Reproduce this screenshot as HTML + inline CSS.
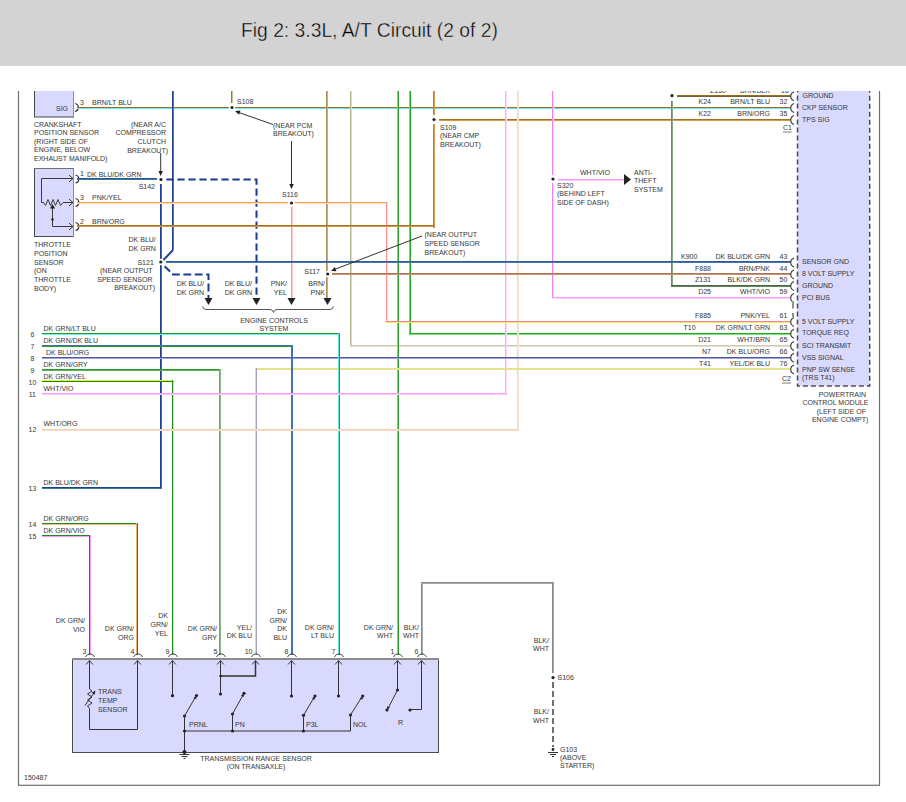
<!DOCTYPE html>
<html><head><meta charset="utf-8"><style>
html,body{margin:0;padding:0;background:#fff;}
body{width:906px;height:802px;position:relative;overflow:hidden;font-family:"Liberation Sans",sans-serif;}
#hdr{position:absolute;left:0;top:0;width:906px;height:66px;background:#d3d3d3;}
#ttl{position:absolute;left:241px;top:19px;font-size:19.3px;color:#000;white-space:nowrap;line-height:24px;-webkit-text-stroke:0.4px #d3d3d3;}
svg{position:absolute;left:0;top:0;}
svg text{font-family:"Liberation Sans",sans-serif;stroke:#3c3c3c;stroke-width:0.04px;}
</style></head><body>
<svg width="906" height="802" viewBox="0 0 906 802">
<defs><clipPath id="cp"><rect x="0" y="91" width="906" height="711"/></clipPath></defs>
<g clip-path="url(#cp)">
<rect x="18.5" y="60" width="861" height="725.3" fill="none" stroke="#707070" stroke-width="1.2"/>
<rect x="34.5" y="80" width="39" height="37" fill="#d9d9fe" stroke="#4a4a4a" stroke-width="1"/>
<rect x="73" y="80" width="1" height="37.5" fill="#8a8aa0"/>
<text x="56" y="110.6" font-size="7" fill="#3c3c3c">SIG</text>
<path d="M75.0,103.5 Q78.5,104.5 78.3,107.5 Q78.5,110.5 75.0,111.5" stroke="#333" stroke-width="1.2" fill="none" />
<text x="80" y="104.6" font-size="7" fill="#3c3c3c">3</text>
<text x="92" y="104.6" font-size="7" fill="#3c3c3c">BRN/LT BLU</text>
<text x="34" y="126.6" font-size="7" fill="#3c3c3c">CRANKSHAFT</text>
<text x="34" y="135.1" font-size="7" fill="#3c3c3c">POSITION SENSOR</text>
<text x="34" y="143.6" font-size="7" fill="#3c3c3c">(RIGHT SIDE OF</text>
<text x="34" y="152.1" font-size="7" fill="#3c3c3c">ENGINE, BELOW</text>
<text x="34" y="160.6" font-size="7" fill="#3c3c3c">EXHAUST MANIFOLD)</text>
<text x="166" y="126.6" text-anchor="end" font-size="7" fill="#3c3c3c">(NEAR A/C</text>
<text x="166" y="135.1" text-anchor="end" font-size="7" fill="#3c3c3c">COMPRESSOR</text>
<text x="166" y="143.6" text-anchor="end" font-size="7" fill="#3c3c3c">CLUTCH</text>
<text x="168" y="152.8" text-anchor="end" font-size="7" fill="#3c3c3c">BREAKOUT)</text>
<rect x="34.5" y="168.5" width="39" height="68" fill="#d9d9fe" stroke="#4a4a4a" stroke-width="1"/>
<rect x="73" y="168" width="1" height="69" fill="#8a8aa0"/>
<rect x="34" y="168" width="40" height="1" fill="#707080"/>
<path d="M73,178.5 L41.5,178.5 L41.5,202.5 L43.5,202.5 L45.5,205.5 L48,199.5 L50.5,205.5 L53,199.5 L55.5,205.5 L58,199.5 L60.5,205.5 L63,202.5 L73,202.5" stroke="#3a3a3a" stroke-width="1" fill="none" />
<path d="M69.0,181.9 L73,178.5 L69.0,175.1" stroke="#3a3a3a" stroke-width="1" fill="none" />
<path d="M69.0,205.9 L73,202.5 L69.0,199.1" stroke="#3a3a3a" stroke-width="1" fill="none" />
<path d="M69.0,229.9 L73,226.5 L69.0,223.1" stroke="#3a3a3a" stroke-width="1" fill="none" />
<path d="M52.5,208 L52.5,226.5 L73,226.5" stroke="#3a3a3a" stroke-width="1" fill="none" />
<path d="M50,208.5 L55,208.5 L52.5,204 Z" fill="#222222"/>
<circle cx="52.5" cy="219.5" r="1.2" fill="#222222"/>
<path d="M75.5,175 Q79,176 78.8,179 Q79,182 75.5,183" stroke="#333" stroke-width="1.2" fill="none" />
<path d="M75.5,198.5 Q79,199.5 78.8,202.5 Q79,205.5 75.5,206.5" stroke="#333" stroke-width="1.2" fill="none" />
<path d="M75.5,222.5 Q79,223.5 78.8,226.5 Q79,229.5 75.5,230.5" stroke="#333" stroke-width="1.2" fill="none" />
<text x="80" y="175.5" font-size="7" fill="#3c3c3c">1</text>
<text x="87" y="176.6" font-size="7" fill="#3c3c3c">DK BLU/DK GRN</text>
<text x="80" y="199.5" font-size="7" fill="#3c3c3c">3</text>
<text x="92" y="199.7" font-size="7" fill="#3c3c3c">PNK/YEL</text>
<text x="80" y="223.8" font-size="7" fill="#3c3c3c">2</text>
<text x="92" y="223.8" font-size="7" fill="#3c3c3c">BRN/ORG</text>
<text x="34" y="247.0" font-size="7" fill="#3c3c3c">THROTTLE</text>
<text x="34" y="255.75" font-size="7" fill="#3c3c3c">POSITION</text>
<text x="34" y="264.5" font-size="7" fill="#3c3c3c">SENSOR</text>
<text x="34" y="273.25" font-size="7" fill="#3c3c3c">(ON</text>
<text x="34" y="282.0" font-size="7" fill="#3c3c3c">THROTTLE</text>
<text x="34" y="290.75" font-size="7" fill="#3c3c3c">BODY)</text>
<rect x="797.5" y="80" width="72.2" height="306" fill="#d9d9fe" stroke="#4a4a4a" stroke-width="1.5" stroke-dasharray="5,3"/>
<rect x="77" y="107" width="714" height="1" fill="#9a6e1e"/>
<rect x="77" y="108" width="714" height="1" fill="#66f0f0"/>
<rect x="677" y="95" width="114" height="1" fill="#94701e"/>
<rect x="677" y="96" width="114" height="1" fill="#7a6030"/>
<rect x="439" y="119" width="352" height="1" fill="#a07228"/>
<rect x="439" y="120" width="352" height="1" fill="#d89a40"/>
<rect x="231" y="80" width="1" height="23" fill="#7a8a30"/>
<rect x="232" y="80" width="1" height="23" fill="#c0c890"/>
<rect x="172" y="80" width="1" height="170" fill="#1f3f94"/>
<rect x="173" y="80" width="1" height="170" fill="#3c9060"/>
<path d="M173,250 L163,260.5" stroke="#1f3f94" stroke-width="2" fill="none" />
<rect x="326" y="80" width="1" height="218" fill="#b08a58"/>
<rect x="327" y="80" width="1" height="218" fill="#c8a888"/>
<rect x="350" y="80" width="1" height="267" fill="#b8b690"/>
<rect x="351" y="80" width="1" height="267" fill="#dcdac8"/>
<rect x="350" y="345" width="441" height="1" fill="#cfc7ae"/>
<rect x="350" y="346" width="441" height="1" fill="#e4e0d2"/>
<rect x="397" y="80" width="1" height="575" fill="#8fcc8f"/>
<rect x="398" y="80" width="1" height="575" fill="#2a9a2a"/>
<rect x="409" y="80" width="1" height="255" fill="#66dd66"/>
<rect x="410" y="80" width="1" height="255" fill="#22aa22"/>
<rect x="409" y="333" width="382" height="1" fill="#22aa22"/>
<rect x="409" y="334" width="382" height="1" fill="#7de07d"/>
<rect x="433" y="80" width="1" height="35" fill="#b08848"/>
<rect x="434" y="80" width="1" height="35" fill="#d09848"/>
<rect x="433" y="124" width="1" height="104" fill="#b08848"/>
<rect x="434" y="124" width="1" height="104" fill="#d09848"/>
<rect x="505" y="80" width="1" height="315" fill="#f4b0f4"/>
<rect x="506" y="80" width="1" height="315" fill="#ffd8ff"/>
<rect x="517" y="80" width="1" height="351" fill="#f5d8c0"/>
<rect x="518" y="80" width="1" height="351" fill="#f8e6d8"/>
<rect x="552" y="80" width="1" height="95" fill="#f080f0"/>
<rect x="553" y="80" width="1" height="95" fill="#ffe0ff"/>
<rect x="552" y="183" width="1" height="115" fill="#f080f0"/>
<rect x="553" y="183" width="1" height="115" fill="#ffe0ff"/>
<rect x="552" y="297" width="239" height="1" fill="#ff99ff"/>
<rect x="552" y="298" width="239" height="1" fill="#ffd0ff"/>
<rect x="671" y="101" width="1" height="186" fill="#6a8a6a"/>
<rect x="672" y="101" width="1" height="186" fill="#88a888"/>
<rect x="671" y="285" width="120" height="1" fill="#4c644c"/>
<rect x="671" y="286" width="120" height="1" fill="#5a8c5a"/>
<rect x="77" y="178" width="80" height="1" fill="#2850a0"/>
<rect x="77" y="179" width="80" height="1" fill="#3c8080"/>
<rect x="160" y="184" width="1" height="305" fill="#1f3f94"/>
<rect x="161" y="184" width="1" height="305" fill="#2a8a50"/>
<rect x="42" y="487" width="119" height="1" fill="#1f3f94"/>
<rect x="42" y="488" width="119" height="1" fill="#3c8080"/>
<path d="M166.4,179.5 L256.5,179.5 L256.5,298" stroke="#1a3a94" stroke-width="2" fill="none" stroke-dasharray="7.3,3.7"/>
<rect x="77" y="202" width="310" height="1" fill="#ff9098"/>
<rect x="77" y="203" width="310" height="1" fill="#f4f080"/>
<rect x="386" y="202" width="1" height="121" fill="#ff9098"/>
<rect x="387" y="202" width="1" height="121" fill="#f4f080"/>
<rect x="386" y="321" width="405" height="1" fill="#ff8090"/>
<rect x="386" y="322" width="405" height="1" fill="#f0ee50"/>
<rect x="291" y="207" width="1" height="91" fill="#ff9aa0"/>
<rect x="292" y="207" width="1" height="91" fill="#ffc8c8"/>
<rect x="77" y="225" width="358" height="1" fill="#a07228"/>
<rect x="77" y="226" width="358" height="1" fill="#d89a40"/>
<rect x="166" y="261" width="625" height="1" fill="#3058a0"/>
<rect x="166" y="262" width="625" height="1" fill="#4a78a0"/>
<path d="M164.6,266.3 L170,271.5" stroke="#1a3a94" stroke-width="2" fill="none" />
<path d="M172,274.5 L208.5,274.5 L208.5,298" stroke="#1a3a94" stroke-width="2" fill="none" stroke-dasharray="7.8,3.6"/>
<rect x="332" y="273" width="459" height="1" fill="#a87850"/>
<rect x="332" y="274" width="459" height="1" fill="#c89078"/>
<rect x="42" y="357" width="749" height="1" fill="#5058a0"/>
<rect x="42" y="358" width="749" height="1" fill="#a0a4d0"/>
<rect x="255" y="368" width="536" height="1" fill="#eeee30"/>
<rect x="255" y="369" width="536" height="1" fill="#d8d8f0"/>
<rect x="255" y="368" width="1" height="287" fill="#eeee30"/>
<rect x="256" y="368" width="1" height="287" fill="#a0a0c0"/>
<rect x="42" y="333" width="298" height="1" fill="#22a022"/>
<rect x="42" y="334" width="298" height="1" fill="#66f0f0"/>
<rect x="338" y="333" width="1" height="322" fill="#66e0e0"/>
<rect x="339" y="333" width="1" height="322" fill="#22a022"/>
<rect x="42" y="345" width="251" height="1" fill="#4a6ab0"/>
<rect x="42" y="346" width="251" height="1" fill="#22a022"/>
<rect x="291" y="345" width="1" height="310" fill="#22a022"/>
<rect x="292" y="345" width="1" height="310" fill="#4070b0"/>
<rect x="42" y="369" width="179" height="1" fill="#2a9a2a"/>
<rect x="42" y="370" width="179" height="1" fill="#60b060"/>
<rect x="219" y="369" width="1" height="286" fill="#6aaa6a"/>
<rect x="220" y="369" width="1" height="286" fill="#88bb88"/>
<rect x="42" y="380" width="132" height="1" fill="#eeee30"/>
<rect x="42" y="381" width="132" height="1" fill="#1a8a1a"/>
<rect x="172" y="380" width="1" height="275" fill="#1a8a1a"/>
<rect x="173" y="380" width="1" height="275" fill="#eeee30"/>
<rect x="42" y="393" width="465" height="1" fill="#ff99ff"/>
<rect x="42" y="394" width="465" height="1" fill="#ffd0ff"/>
<rect x="42" y="429" width="477" height="1" fill="#f5d0b0"/>
<rect x="42" y="430" width="477" height="1" fill="#f8e0cc"/>
<rect x="42" y="523" width="96" height="1" fill="#1a8a1a"/>
<rect x="42" y="524" width="96" height="1" fill="#f0c080"/>
<rect x="136" y="523" width="1" height="132" fill="#f0b070"/>
<rect x="137" y="523" width="1" height="132" fill="#1a8a1a"/>
<rect x="42" y="535" width="49" height="1" fill="#1a8a1a"/>
<rect x="42" y="536" width="49" height="1" fill="#ff99ff"/>
<rect x="89" y="535" width="1" height="120" fill="#1a8a1a"/>
<rect x="90" y="535" width="1" height="120" fill="#ff99ff"/>
<rect x="421" y="582" width="1" height="73" fill="#888"/>
<rect x="422" y="582" width="1" height="73" fill="#aaa"/>
<rect x="421" y="582" width="133" height="1" fill="#888"/>
<rect x="421" y="583" width="133" height="1" fill="#aaa"/>
<rect x="552" y="582" width="1" height="91" fill="#888"/>
<rect x="553" y="582" width="1" height="91" fill="#aaa"/>
<path d="M553,682 L553,747" stroke="#707070" stroke-width="2" fill="none" stroke-dasharray="6,3"/>
<circle cx="232" cy="107.5" r="3.2" fill="#fff"/>
<circle cx="232" cy="107.5" r="1.6" fill="#222222"/>
<text x="237" y="104" font-size="7" fill="#3c3c3c">S108</text>
<line x1="273" y1="124.5" x2="236" y2="111.5" stroke="#333" stroke-width="1" />
<path d="M240.5,110.5 L235,111 L239.0,114.8 Z" fill="#222222"/>
<text x="273" y="127.5" font-size="7" fill="#3c3c3c">(NEAR PCM</text>
<text x="273" y="135.7" font-size="7" fill="#3c3c3c">BREAKOUT)</text>
<line x1="291.5" y1="141" x2="291.5" y2="186" stroke="#333" stroke-width="1" />
<path d="M289.2,184.0 L291.5,189 L293.8,184.0 Z" fill="#222222"/>
<text x="282" y="197" font-size="7" fill="#3c3c3c">S116</text>
<circle cx="291.5" cy="203" r="3.2" fill="#fff"/>
<circle cx="291.5" cy="203" r="1.6" fill="#222222"/>
<circle cx="161" cy="179.5" r="3.2" fill="#fff"/>
<circle cx="161" cy="179.5" r="1.6" fill="#222222"/>
<line x1="160.7" y1="153" x2="160.7" y2="172" stroke="#333" stroke-width="1" />
<path d="M158.4,171.0 L160.7,176 L162.9,171.0 Z" fill="#222222"/>
<text x="155" y="188.7" text-anchor="end" font-size="7" fill="#3c3c3c">S142</text>
<circle cx="434" cy="119.5" r="3.2" fill="#fff"/>
<circle cx="434" cy="119.5" r="1.6" fill="#222222"/>
<text x="440" y="129.7" font-size="7" fill="#3c3c3c">S109</text>
<text x="440" y="138.2" font-size="7" fill="#3c3c3c">(NEAR CMP</text>
<text x="440" y="146.7" font-size="7" fill="#3c3c3c">BREAKOUT)</text>
<circle cx="553" cy="179" r="3.2" fill="#fff"/>
<circle cx="553" cy="179" r="1.6" fill="#222222"/>
<rect x="558" y="179" width="67" height="1" fill="#ff90ff"/>
<rect x="558" y="180" width="67" height="1" fill="#ffd0ff"/>
<path d="M624,174 L631,179.5 L624,185 Z" fill="#222222"/>
<text x="580" y="175" font-size="7" fill="#3c3c3c">WHT/VIO</text>
<text x="557" y="187.8" font-size="7" fill="#3c3c3c">S320</text>
<text x="557" y="196.3" font-size="7" fill="#3c3c3c">(BEHIND LEFT</text>
<text x="557" y="204.8" font-size="7" fill="#3c3c3c">SIDE OF DASH)</text>
<text x="634" y="174.7" font-size="7" fill="#3c3c3c">ANTI-</text>
<text x="634" y="183.2" font-size="7" fill="#3c3c3c">THEFT</text>
<text x="634" y="191.7" font-size="7" fill="#3c3c3c">SYSTEM</text>
<circle cx="672" cy="95.7" r="3.2" fill="#fff"/>
<circle cx="672" cy="95.7" r="1.6" fill="#222222"/>
<circle cx="160.8" cy="262" r="3.2" fill="#fff"/>
<circle cx="160.8" cy="262" r="1.6" fill="#222222"/>
<text x="155.8" y="242.0" text-anchor="end" font-size="7" fill="#3c3c3c">DK BLU/</text>
<text x="155.8" y="250.8" text-anchor="end" font-size="7" fill="#3c3c3c">DK GRN</text>
<text x="153.8" y="264.5" text-anchor="end" font-size="7" fill="#3c3c3c">S121</text>
<text x="152.5" y="273.0" text-anchor="end" font-size="7" fill="#3c3c3c">(NEAR OUTPUT</text>
<text x="152.5" y="281.8" text-anchor="end" font-size="7" fill="#3c3c3c">SPEED SENSOR</text>
<text x="155" y="290" text-anchor="end" font-size="7" fill="#3c3c3c">BREAKOUT)</text>
<circle cx="327.7" cy="274" r="3.2" fill="#fff"/>
<circle cx="327.7" cy="274" r="1.6" fill="#222222"/>
<text x="320" y="274.3" text-anchor="end" font-size="7" fill="#3c3c3c">S117</text>
<line x1="422" y1="236" x2="333" y2="270" stroke="#333" stroke-width="1" />
<path d="M334.9,267.1 L331,271 L336.5,271.3 Z" fill="#222222"/>
<text x="424.5" y="236.5" font-size="7" fill="#3c3c3c">(NEAR OUTPUT</text>
<text x="424.5" y="245.5" font-size="7" fill="#3c3c3c">SPEED SENSOR</text>
<text x="424.5" y="254.5" font-size="7" fill="#3c3c3c">BREAKOUT)</text>
<path d="M204.5,298 L212.5,298 L208.5,305 Z" fill="#222222"/>
<path d="M252.5,298 L260.5,298 L256.5,305 Z" fill="#222222"/>
<path d="M287.5,298 L295.5,298 L291.5,305 Z" fill="#222222"/>
<path d="M323.5,298 L331.5,298 L327.5,305 Z" fill="#222222"/>
<text x="204" y="286.0" text-anchor="end" font-size="7" fill="#3c3c3c">DK BLU/</text>
<text x="204" y="294.8" text-anchor="end" font-size="7" fill="#3c3c3c">DK GRN</text>
<text x="252" y="286.0" text-anchor="end" font-size="7" fill="#3c3c3c">DK BLU/</text>
<text x="252" y="294.8" text-anchor="end" font-size="7" fill="#3c3c3c">DK GRN</text>
<text x="287" y="286.0" text-anchor="end" font-size="7" fill="#3c3c3c">PNK/</text>
<text x="287" y="294.8" text-anchor="end" font-size="7" fill="#3c3c3c">YEL</text>
<text x="325" y="286.0" text-anchor="end" font-size="7" fill="#3c3c3c">BRN/</text>
<text x="325" y="294.8" text-anchor="end" font-size="7" fill="#3c3c3c">PNK</text>
<path d="M202.5,306.5 Q203,309.5 206,309.5 L270,309.5 Q273,309.5 273.5,312.5 Q274,309.5 277,309.5 L330,309.5 Q333,309.5 333.5,306.5" stroke="#555" stroke-width="1" fill="none" />
<text x="274" y="323.0" text-anchor="middle" font-size="7" fill="#3c3c3c">ENGINE CONTROLS</text>
<text x="274" y="331.2" text-anchor="middle" font-size="7" fill="#3c3c3c">SYSTEM</text>
<text x="32.4" y="336.5" text-anchor="middle" font-size="7" fill="#3c3c3c">6</text>
<text x="43.5" y="330.7" font-size="7" fill="#3c3c3c">DK GRN/LT BLU</text>
<text x="32.4" y="348.5" text-anchor="middle" font-size="7" fill="#3c3c3c">7</text>
<text x="43.5" y="342.7" font-size="7" fill="#3c3c3c">DK GRN/DK BLU</text>
<text x="32.4" y="360.5" text-anchor="middle" font-size="7" fill="#3c3c3c">8</text>
<text x="46" y="354.7" font-size="7" fill="#3c3c3c">DK BLU/ORG</text>
<text x="32.4" y="372.5" text-anchor="middle" font-size="7" fill="#3c3c3c">9</text>
<text x="43.5" y="366.7" font-size="7" fill="#3c3c3c">DK GRN/GRY</text>
<text x="32.4" y="384.5" text-anchor="middle" font-size="7" fill="#3c3c3c">10</text>
<text x="43.5" y="378.7" font-size="7" fill="#3c3c3c">DK GRN/YEL</text>
<text x="32.4" y="396.5" text-anchor="middle" font-size="7" fill="#3c3c3c">11</text>
<text x="43.5" y="390.7" font-size="7" fill="#3c3c3c">WHT/VIO</text>
<text x="32.4" y="432" text-anchor="middle" font-size="7" fill="#3c3c3c">12</text>
<text x="43.5" y="426.2" font-size="7" fill="#3c3c3c">WHT/ORG</text>
<text x="32.4" y="490.5" text-anchor="middle" font-size="7" fill="#3c3c3c">13</text>
<text x="43.5" y="484.7" font-size="7" fill="#3c3c3c">DK BLU/DK GRN</text>
<text x="32.4" y="526.5" text-anchor="middle" font-size="7" fill="#3c3c3c">14</text>
<text x="43.5" y="520.7" font-size="7" fill="#3c3c3c">DK GRN/ORG</text>
<text x="32.4" y="538.5" text-anchor="middle" font-size="7" fill="#3c3c3c">15</text>
<text x="43.5" y="532.7" font-size="7" fill="#3c3c3c">DK GRN/VIO</text>
<text x="726" y="92.8" text-anchor="end" font-size="7" fill="#3c3c3c">Z150</text>
<text x="770" y="92.8" text-anchor="end" font-size="7" fill="#3c3c3c">BRN/BLK</text>
<text x="781" y="92.8" font-size="7" fill="#3c3c3c">16</text>
<path d="M794,91.7 Q790.5,93.2 790.8,96.2 Q790.5,99.2 794,100.7" stroke="#3a3a3a" stroke-width="1.1" fill="none" />
<text x="802.5" y="98.2" font-size="7" fill="#3c3c3c">GROUND</text>
<text x="698.5" y="104.2" font-size="7" fill="#3c3c3c">K24</text>
<text x="770" y="104.2" text-anchor="end" font-size="7" fill="#3c3c3c">BRN/LT BLU</text>
<text x="779.5" y="104.2" font-size="7" fill="#3c3c3c">32</text>
<path d="M794,103.5 Q790.5,105.0 790.8,108.0 Q790.5,111.0 794,112.5" stroke="#3a3a3a" stroke-width="1.1" fill="none" />
<text x="802" y="110.0" font-size="7" fill="#3c3c3c">CKP SENSOR</text>
<text x="698.5" y="116.2" font-size="7" fill="#3c3c3c">K22</text>
<text x="770" y="116.2" text-anchor="end" font-size="7" fill="#3c3c3c">BRN/ORG</text>
<text x="779.5" y="116.2" font-size="7" fill="#3c3c3c">35</text>
<path d="M794,115.5 Q790.5,117.0 790.8,120.0 Q790.5,123.0 794,124.5" stroke="#3a3a3a" stroke-width="1.1" fill="none" />
<text x="802" y="122.0" font-size="7" fill="#3c3c3c">TPS SIG</text>
<text x="681" y="258.7" font-size="7" fill="#3c3c3c">K900</text>
<text x="770" y="258.7" text-anchor="end" font-size="7" fill="#3c3c3c">DK BLU/DK GRN</text>
<text x="779.5" y="258.7" font-size="7" fill="#3c3c3c">43</text>
<path d="M794,258.0 Q790.5,259.5 790.8,262.5 Q790.5,265.5 794,267.0" stroke="#3a3a3a" stroke-width="1.1" fill="none" />
<text x="802" y="263.5" font-size="7" fill="#3c3c3c">SENSOR GND</text>
<text x="711" y="270.59999999999997" text-anchor="end" font-size="7" fill="#3c3c3c">F888</text>
<text x="770" y="270.59999999999997" text-anchor="end" font-size="7" fill="#3c3c3c">BRN/PNK</text>
<text x="779.5" y="270.59999999999997" font-size="7" fill="#3c3c3c">44</text>
<path d="M794,269.9 Q790.5,271.4 790.8,274.4 Q790.5,277.4 794,278.9" stroke="#3a3a3a" stroke-width="1.1" fill="none" />
<text x="802" y="276.4" font-size="7" fill="#3c3c3c">8 VOLT SUPPLY</text>
<text x="711" y="282.3" text-anchor="end" font-size="7" fill="#3c3c3c">Z131</text>
<text x="770" y="282.3" text-anchor="end" font-size="7" fill="#3c3c3c">BLK/DK GRN</text>
<text x="779.5" y="282.3" font-size="7" fill="#3c3c3c">50</text>
<path d="M794,281.6 Q790.5,283.1 790.8,286.1 Q790.5,289.1 794,290.6" stroke="#3a3a3a" stroke-width="1.1" fill="none" />
<text x="802" y="288.1" font-size="7" fill="#3c3c3c">GROUND</text>
<text x="711" y="294.3" text-anchor="end" font-size="7" fill="#3c3c3c">D25</text>
<text x="770" y="294.3" text-anchor="end" font-size="7" fill="#3c3c3c">WHT/VIO</text>
<text x="779.5" y="294.3" font-size="7" fill="#3c3c3c">59</text>
<path d="M794,293.6 Q790.5,295.1 790.8,298.1 Q790.5,301.1 794,302.6" stroke="#3a3a3a" stroke-width="1.1" fill="none" />
<text x="802" y="300.1" font-size="7" fill="#3c3c3c">PCI BUS</text>
<text x="711" y="318.09999999999997" text-anchor="end" font-size="7" fill="#3c3c3c">F885</text>
<text x="770" y="318.09999999999997" text-anchor="end" font-size="7" fill="#3c3c3c">PNK/YEL</text>
<text x="779.5" y="318.09999999999997" font-size="7" fill="#3c3c3c">61</text>
<path d="M794,317.4 Q790.5,318.9 790.8,321.9 Q790.5,324.9 794,326.4" stroke="#3a3a3a" stroke-width="1.1" fill="none" />
<text x="802" y="323.9" font-size="7" fill="#3c3c3c">5 VOLT SUPPLY</text>
<text x="683.5" y="330.0" font-size="7" fill="#3c3c3c">T10</text>
<text x="770" y="330.0" text-anchor="end" font-size="7" fill="#3c3c3c">DK GRN/LT GRN</text>
<text x="779.5" y="330.0" font-size="7" fill="#3c3c3c">63</text>
<path d="M794,329.3 Q790.5,330.8 790.8,333.8 Q790.5,336.8 794,338.3" stroke="#3a3a3a" stroke-width="1.1" fill="none" />
<text x="802" y="334.8" font-size="7" fill="#3c3c3c">TORQUE REQ</text>
<text x="711" y="342.2" text-anchor="end" font-size="7" fill="#3c3c3c">D21</text>
<text x="770" y="342.2" text-anchor="end" font-size="7" fill="#3c3c3c">WHT/BRN</text>
<text x="779.5" y="342.2" font-size="7" fill="#3c3c3c">65</text>
<path d="M794,341.5 Q790.5,343.0 790.8,346.0 Q790.5,349.0 794,350.5" stroke="#3a3a3a" stroke-width="1.1" fill="none" />
<text x="802" y="348.0" font-size="7" fill="#3c3c3c">SCI TRANSMIT</text>
<text x="711" y="354.0" text-anchor="end" font-size="7" fill="#3c3c3c">N7</text>
<text x="770" y="354.0" text-anchor="end" font-size="7" fill="#3c3c3c">DK BLU/ORG</text>
<text x="779.5" y="354.0" font-size="7" fill="#3c3c3c">66</text>
<path d="M794,353.3 Q790.5,354.8 790.8,357.8 Q790.5,360.8 794,362.3" stroke="#3a3a3a" stroke-width="1.1" fill="none" />
<text x="802" y="359.8" font-size="7" fill="#3c3c3c">VSS SIGNAL</text>
<text x="711" y="365.7" text-anchor="end" font-size="7" fill="#3c3c3c">T41</text>
<text x="770" y="365.7" text-anchor="end" font-size="7" fill="#3c3c3c">YEL/DK BLU</text>
<text x="779.5" y="365.7" font-size="7" fill="#3c3c3c">76</text>
<path d="M794,365.0 Q790.5,366.5 790.8,369.5 Q790.5,372.5 794,374.0" stroke="#3a3a3a" stroke-width="1.1" fill="none" />
<text x="802" y="371.5" font-size="7" fill="#3c3c3c">PNP SW SENSE</text>
<text x="802" y="380" font-size="7" fill="#3c3c3c">(TRS T41)</text>
<text x="783" y="130.3" font-size="7" fill="#3c3c3c">C1</text>
<line x1="783" y1="132" x2="791.5" y2="132" stroke="#555" stroke-width="0.8" />
<text x="782" y="381.3" font-size="7" fill="#3c3c3c">C2</text>
<line x1="782" y1="383" x2="791" y2="383" stroke="#555" stroke-width="0.8" />
<line x1="793" y1="303" x2="793" y2="308.5" stroke="#555" stroke-width="1.3" />
<line x1="793" y1="313" x2="793" y2="317" stroke="#555" stroke-width="1.3" />
<text x="866" y="396.8" text-anchor="end" font-size="7" fill="#3c3c3c">POWERTRAIN</text>
<text x="868.3" y="405" text-anchor="end" font-size="7" fill="#3c3c3c">CONTROL MODULE</text>
<text x="866" y="413.5" text-anchor="end" font-size="7" fill="#3c3c3c">(LEFT SIDE OF</text>
<text x="868.3" y="422.3" text-anchor="end" font-size="7" fill="#3c3c3c">ENGINE COMPT)</text>
<rect x="72.5" y="658.5" width="366" height="94" fill="#d9d9fe" stroke="#4a4a4a" stroke-width="1"/>
<rect x="72" y="658" width="367" height="2" fill="#8c8c8c"/>
<path d="M85.5,657 Q87.0,653.8 90.0,653.8 Q93.0,653.8 94.5,657" stroke="#444" stroke-width="1" fill="none" />
<text x="86.5" y="653.5" text-anchor="end" font-size="7" fill="#3c3c3c">3</text>
<path d="M92.9,664.5 L89.5,660.5 L86.1,664.5" stroke="#3a3a3a" stroke-width="1" fill="none" />
<path d="M133.5,657 Q135.0,653.8 138.0,653.8 Q141.0,653.8 142.5,657" stroke="#444" stroke-width="1" fill="none" />
<text x="134.5" y="653.5" text-anchor="end" font-size="7" fill="#3c3c3c">4</text>
<path d="M140.9,664.5 L137.5,660.5 L134.1,664.5" stroke="#3a3a3a" stroke-width="1" fill="none" />
<path d="M168.5,657 Q170.0,653.8 173.0,653.8 Q176.0,653.8 177.5,657" stroke="#444" stroke-width="1" fill="none" />
<text x="169.5" y="653.5" text-anchor="end" font-size="7" fill="#3c3c3c">9</text>
<path d="M175.9,664.5 L172.5,660.5 L169.1,664.5" stroke="#3a3a3a" stroke-width="1" fill="none" />
<path d="M216.5,657 Q218.0,653.8 221.0,653.8 Q224.0,653.8 225.5,657" stroke="#444" stroke-width="1" fill="none" />
<text x="217.5" y="653.5" text-anchor="end" font-size="7" fill="#3c3c3c">5</text>
<path d="M223.9,664.5 L220.5,660.5 L217.1,664.5" stroke="#3a3a3a" stroke-width="1" fill="none" />
<path d="M251.5,657 Q253.0,653.8 256.0,653.8 Q259.0,653.8 260.5,657" stroke="#444" stroke-width="1" fill="none" />
<text x="252.5" y="653.5" text-anchor="end" font-size="7" fill="#3c3c3c">10</text>
<path d="M258.9,664.5 L255.5,660.5 L252.1,664.5" stroke="#3a3a3a" stroke-width="1" fill="none" />
<path d="M287.5,657 Q289.0,653.8 292.0,653.8 Q295.0,653.8 296.5,657" stroke="#444" stroke-width="1" fill="none" />
<text x="288.5" y="653.5" text-anchor="end" font-size="7" fill="#3c3c3c">8</text>
<path d="M294.9,664.5 L291.5,660.5 L288.1,664.5" stroke="#3a3a3a" stroke-width="1" fill="none" />
<path d="M334.5,657 Q336.0,653.8 339.0,653.8 Q342.0,653.8 343.5,657" stroke="#444" stroke-width="1" fill="none" />
<text x="335.5" y="653.5" text-anchor="end" font-size="7" fill="#3c3c3c">7</text>
<path d="M341.9,664.5 L338.5,660.5 L335.1,664.5" stroke="#3a3a3a" stroke-width="1" fill="none" />
<path d="M393.5,657 Q395.0,653.8 398.0,653.8 Q401.0,653.8 402.5,657" stroke="#444" stroke-width="1" fill="none" />
<text x="394.5" y="653.5" text-anchor="end" font-size="7" fill="#3c3c3c">1</text>
<path d="M400.9,664.5 L397.5,660.5 L394.1,664.5" stroke="#3a3a3a" stroke-width="1" fill="none" />
<path d="M417.5,657 Q419.0,653.8 422.0,653.8 Q425.0,653.8 426.5,657" stroke="#444" stroke-width="1" fill="none" />
<text x="418.5" y="653.5" text-anchor="end" font-size="7" fill="#3c3c3c">6</text>
<path d="M424.9,664.5 L421.5,660.5 L418.1,664.5" stroke="#3a3a3a" stroke-width="1" fill="none" />
<path d="M89.5,661 L89.5,689 L92,691 L87.5,694 L92,697 L87.5,700 L92,703 L87.5,706 L89.5,708.5 L89.5,729.5 L137.5,729.5 L137.5,661" stroke="#333" stroke-width="1" fill="none" />
<line x1="85" y1="705.5" x2="94.5" y2="692" stroke="#333" stroke-width="1" />
<path d="M94.7,694.8 L95.5,690.5 L91.7,692.7 Z" fill="#222222"/>
<text x="98" y="694.0" font-size="7" fill="#3c3c3c">TRANS</text>
<text x="98" y="702.8" font-size="7" fill="#3c3c3c">TEMP</text>
<text x="98" y="711.6" font-size="7" fill="#3c3c3c">SENSOR</text>
<line x1="172.5" y1="661" x2="172.5" y2="695.7" stroke="#333" stroke-width="1" />
<circle cx="172.5" cy="695.7" r="1.6" fill="#222222"/>
<circle cx="184.5" cy="716" r="1.6" fill="#222222"/>
<line x1="184.5" y1="716" x2="195.5" y2="697" stroke="#333" stroke-width="1" />
<path d="M196.3,699.3 L196.5,695.5 L193.5,697.9 Z" fill="#222222"/>
<circle cx="196.5" cy="695.5" r="1.6" fill="#222222"/>
<line x1="184.5" y1="716" x2="184.5" y2="752" stroke="#333" stroke-width="1" />
<circle cx="184.5" cy="731" r="1.6" fill="#222222"/>
<circle cx="184.5" cy="752" r="2" fill="#222222"/>
<text x="189" y="726.5" font-size="7" fill="#3c3c3c">PRNL</text>
<line x1="184.5" y1="731" x2="350.5" y2="731" stroke="#333" stroke-width="1" />
<line x1="179.5" y1="754.5" x2="189.5" y2="754.5" stroke="#333" stroke-width="1" />
<line x1="181.5" y1="756.5" x2="187.5" y2="756.5" stroke="#333" stroke-width="1" />
<line x1="183.5" y1="758.5" x2="185.5" y2="758.5" stroke="#333" stroke-width="1" />
<line x1="220.5" y1="661" x2="220.5" y2="694" stroke="#333" stroke-width="1" />
<circle cx="220.5" cy="694" r="1.6" fill="#222222"/>
<path d="M220.5,676 L255.5,676 L255.5,661" stroke="#333" stroke-width="1.5" fill="none" />
<circle cx="220.5" cy="676" r="1.2" fill="#222222"/>
<circle cx="232.5" cy="714" r="1.6" fill="#222222"/>
<line x1="232.5" y1="714" x2="243" y2="695" stroke="#333" stroke-width="1" />
<path d="M243.8,697.1 L244,693.3 L241.0,695.7 Z" fill="#222222"/>
<circle cx="244" cy="693.3" r="1.6" fill="#222222"/>
<line x1="232.5" y1="714" x2="232.5" y2="731" stroke="#333" stroke-width="1" />
<circle cx="232.5" cy="731" r="1.6" fill="#222222"/>
<text x="235" y="727" font-size="7" fill="#3c3c3c">PN</text>
<line x1="291.5" y1="661" x2="291.5" y2="696" stroke="#333" stroke-width="1" />
<circle cx="291.5" cy="696" r="1.6" fill="#222222"/>
<circle cx="303.5" cy="715.3" r="1.6" fill="#222222"/>
<line x1="303.5" y1="715.3" x2="314" y2="697.5" stroke="#333" stroke-width="1" />
<path d="M314.8,699.8 L315,696 L312.0,698.4 Z" fill="#222222"/>
<circle cx="315" cy="696" r="1.6" fill="#222222"/>
<line x1="303.5" y1="715.3" x2="303.5" y2="731" stroke="#333" stroke-width="1" />
<circle cx="303.5" cy="731" r="1.6" fill="#222222"/>
<text x="306" y="727" font-size="7" fill="#3c3c3c">P3L</text>
<line x1="338.5" y1="661" x2="338.5" y2="696" stroke="#333" stroke-width="1" />
<circle cx="338.5" cy="696" r="1.6" fill="#222222"/>
<circle cx="350.5" cy="715" r="1.6" fill="#222222"/>
<line x1="350.5" y1="715" x2="361.5" y2="697.5" stroke="#333" stroke-width="1" />
<path d="M362.5,699.8 L362.7,696 L359.7,698.4 Z" fill="#222222"/>
<circle cx="362.7" cy="696" r="1.6" fill="#222222"/>
<line x1="350.5" y1="715" x2="350.5" y2="731" stroke="#333" stroke-width="1" />
<text x="353" y="727" font-size="7" fill="#3c3c3c">NOL</text>
<line x1="397.5" y1="661" x2="397.5" y2="690" stroke="#333" stroke-width="1" />
<circle cx="397.5" cy="690" r="1.6" fill="#222222"/>
<line x1="397.5" y1="690" x2="388.5" y2="707.5" stroke="#333" stroke-width="1" />
<path d="M387.2,706.2 L387,710 L390.0,707.6 Z" fill="#222222"/>
<circle cx="387" cy="710" r="1.6" fill="#222222"/>
<text x="398" y="724.5" font-size="7" fill="#3c3c3c">R</text>
<path d="M421.5,661 L421.5,709.5 L410,709.5" stroke="#333" stroke-width="1" fill="none" />
<circle cx="410" cy="710" r="1.6" fill="#222222"/>
<text x="256" y="760.5" text-anchor="middle" font-size="7" fill="#3c3c3c">TRANSMISSION RANGE SENSOR</text>
<text x="256" y="769.0" text-anchor="middle" font-size="7" fill="#3c3c3c">(ON TRANSAXLE)</text>
<text x="85" y="623.0" text-anchor="end" font-size="7" fill="#3c3c3c">DK GRN/</text>
<text x="85" y="631.7" text-anchor="end" font-size="7" fill="#3c3c3c">VIO</text>
<text x="134" y="631.0" text-anchor="end" font-size="7" fill="#3c3c3c">DK GRN/</text>
<text x="134" y="639.7" text-anchor="end" font-size="7" fill="#3c3c3c">ORG</text>
<text x="168" y="618.0" text-anchor="end" font-size="7" fill="#3c3c3c">DK</text>
<text x="168" y="626.8" text-anchor="end" font-size="7" fill="#3c3c3c">GRN/</text>
<text x="168" y="635.6" text-anchor="end" font-size="7" fill="#3c3c3c">YEL</text>
<text x="217" y="631.0" text-anchor="end" font-size="7" fill="#3c3c3c">DK GRN/</text>
<text x="217" y="639.7" text-anchor="end" font-size="7" fill="#3c3c3c">GRY</text>
<text x="252" y="629.5" text-anchor="end" font-size="7" fill="#3c3c3c">YEL/</text>
<text x="252" y="638.2" text-anchor="end" font-size="7" fill="#3c3c3c">DK BLU</text>
<text x="287" y="614.0" text-anchor="end" font-size="7" fill="#3c3c3c">DK</text>
<text x="287" y="622.5" text-anchor="end" font-size="7" fill="#3c3c3c">GRN/</text>
<text x="287" y="631.0" text-anchor="end" font-size="7" fill="#3c3c3c">DK</text>
<text x="287" y="639.5" text-anchor="end" font-size="7" fill="#3c3c3c">BLU</text>
<text x="334" y="629.5" text-anchor="end" font-size="7" fill="#3c3c3c">DK GRN/</text>
<text x="334" y="638.2" text-anchor="end" font-size="7" fill="#3c3c3c">LT BLU</text>
<text x="393" y="629.5" text-anchor="end" font-size="7" fill="#3c3c3c">DK GRN/</text>
<text x="393" y="638.2" text-anchor="end" font-size="7" fill="#3c3c3c">WHT</text>
<text x="419" y="629.5" text-anchor="end" font-size="7" fill="#3c3c3c">BLK/</text>
<text x="419" y="638.2" text-anchor="end" font-size="7" fill="#3c3c3c">WHT</text>
<text x="549" y="642.5" text-anchor="end" font-size="7" fill="#3c3c3c">BLK/</text>
<text x="549" y="651.4" text-anchor="end" font-size="7" fill="#3c3c3c">WHT</text>
<circle cx="553" cy="677.6" r="3.2" fill="#fff"/>
<circle cx="553" cy="677.6" r="1.6" fill="#222222"/>
<text x="557.5" y="680" font-size="7" fill="#3c3c3c">S106</text>
<text x="549" y="714.0" text-anchor="end" font-size="7" fill="#3c3c3c">BLK/</text>
<text x="549" y="722.8" text-anchor="end" font-size="7" fill="#3c3c3c">WHT</text>
<circle cx="553" cy="749.5" r="1.4" fill="#222222"/>
<line x1="548" y1="752.5" x2="558" y2="752.5" stroke="#333" stroke-width="1" />
<line x1="550" y1="754.5" x2="556" y2="754.5" stroke="#333" stroke-width="1" />
<line x1="552" y1="756.5" x2="554" y2="756.5" stroke="#333" stroke-width="1" />
<text x="560" y="752.0" font-size="7" fill="#3c3c3c">G103</text>
<text x="560" y="760.2" font-size="7" fill="#3c3c3c">(ABOVE</text>
<text x="560" y="768.4" font-size="7" fill="#3c3c3c">STARTER)</text>
<text x="24" y="780" font-size="7" fill="#3c3c3c">150487</text>
</g>
</svg>
<div id="hdr"><div id="ttl">Fig 2: 3.3L, A/T Circuit (2 of 2)</div></div>
</body></html>
